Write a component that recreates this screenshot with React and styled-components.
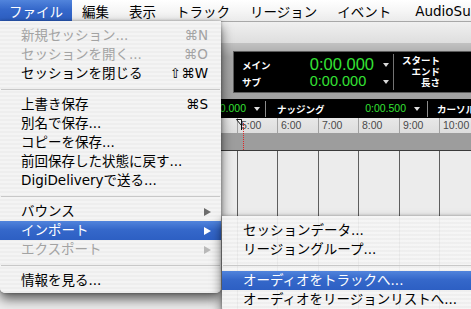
import React from "react";
import styled, { createGlobalStyle, css } from "styled-components";

const Global = createGlobalStyle`
  html, body { margin: 0; padding: 0; background: #ffffff; }
  body { overflow: hidden; }
  #root { width: 471px; height: 309px; }
`;

const UI_FONT = `"DejaVu Sans", "Noto Sans CJK JP", sans-serif`;
const JP_FONT = `"Noto Sans CJK JP", "DejaVu Sans", sans-serif`;
const NUM_FONT = `"Liberation Sans", "DejaVu Sans", sans-serif`;
const HILITE = `linear-gradient(#5184dc, #3568ca 45%, #2d5fc3)`;

const Screen = styled.div`
  position: relative;
  width: 471px;
  height: 309px;
  overflow: hidden;
  display: flex;
  flex-direction: column;
  font-family: ${UI_FONT};
`;

/* ---------- menu bar ---------- */
const MenuBar = styled.div`
  height: 21px;
  flex: none;
  display: flex;
  align-items: stretch;
  background: linear-gradient(#ffffff, #f6f6f6 50%, #ebebeb);
  border-bottom: 1px solid #a8a8a8;
`;

const MenuTitle = styled.div`
  display: flex;
  align-items: center;
  padding: 0 10px;
  font-size: 13.5px;
  color: #000;
  white-space: nowrap;
  ${(p) => p.$first && css`padding-left: 9px; padding-right: 9px;`}
  ${(p) => p.$latin && css`padding-left: 14px;`}
  ${(p) =>
    p.$active &&
    css`
      background: ${HILITE};
      color: #fff;
    `}
`;

/* ---------- background application window ---------- */
const Window = styled.div`
  flex: 1;
  min-height: 0;
  display: flex;
  flex-direction: column;
`;

const TopBand = styled.div`
  height: 21px;
  flex: none;
  background: linear-gradient(#f0f0f0, #dedede);
`;

const TransportBand = styled.div`
  height: 56px;
  flex: none;
  box-sizing: border-box;
  padding: 8px 0 0 233px;
  background: linear-gradient(#c2c2c2, #a6a6a6 25%, #a1a1a1);
`;

const CounterPanel = styled.div`
  height: 42px;
  box-sizing: border-box;
  background: #000;
  border: 1px solid #5c5c5c;
  border-right: none;
  display: flex;
`;

const MainCounter = styled.div`
  width: 159px;
  flex: none;
  box-sizing: border-box;
  padding: 4px 0 0 8px;
  display: grid;
  grid-template-columns: 1fr auto 19px;
  grid-auto-rows: 17px;
  align-items: center;
`;

const PanelLabel = styled.span`
  font-family: ${JP_FONT};
  font-weight: 700;
  font-size: 9.5px;
  color: #fff;
  white-space: nowrap;
`;

const TimeValue = styled.span`
  font-family: ${NUM_FONT};
  font-size: ${(p) => p.$size}px;
  color: #34e234;
  line-height: 1;
  white-space: nowrap;
`;

const DownArrow = styled.span`
  display: block;
  width: 0;
  height: 0;
  border-top: ${(p) => p.$h || 4}px solid ${(p) => p.$color || "#d8d8d8"};
  border-left: ${(p) => (p.$w || 6) / 2}px solid transparent;
  border-right: ${(p) => (p.$w || 6) / 2}px solid transparent;
  flex: none;
`;

const ArrowCell = styled.div`
  justify-self: start;
  padding-left: 9px;
`;

const PanelDivider = styled.div`
  width: 1px;
  margin: 2px 0;
  background: #737373;
  flex: none;
`;

const SideLabels = styled.div`
  width: 46px;
  flex: none;
  box-sizing: border-box;
  padding-top: 3px;
  display: flex;
  flex-direction: column;
  align-items: flex-end;
  line-height: 11px;
`;

const NudgeRow = styled.div`
  height: 19px;
  flex: none;
  background: #000;
  display: flex;
  align-items: center;
`;

const Segment = styled.div`
  width: ${(p) => p.$w}px;
  flex: none;
  height: 100%;
  box-sizing: border-box;
  padding-left: ${(p) => p.$pl}px;
  padding-right: ${(p) => p.$pr || 0}px;
  display: flex;
  align-items: center;
`;

const SegValue = styled.div`
  margin-left: auto;
  display: flex;
  align-items: center;
  gap: 8px;
`;

const RowDivider = styled.div`
  width: 1px;
  height: 16px;
  background: #8c8c8c;
  flex: none;
`;

const Ruler = styled.div`
  height: 15px;
  flex: none;
  display: flex;
  background: linear-gradient(#e8e8e8, #dddddd);
`;

const Band = styled.div`
  height: 17px;
  flex: none;
  background: #9d9d9d;
  border-bottom: 1px solid #3a3a3a;
`;

const Tracks = styled.div`
  flex: 1;
  display: flex;
  background: #ececec;
`;

const LaneLead = styled.div`
  width: 237px;
  flex: none;
`;

const Lane = styled.div`
  width: ${(p) => p.$w}px;
  flex: none;
  box-sizing: border-box;
  border-left: 1px solid ${(p) => p.$line};
  padding-left: 3px;
  font-family: ${NUM_FONT};
  font-size: 10.5px;
  line-height: 15px;
  color: #4a4a4a;
  white-space: nowrap;
`;

const Playhead = styled.svg`
  position: absolute;
  left: 236px;
  top: 119px;
`;

const CursorLine = styled.div`
  position: absolute;
  left: 243px;
  top: 123px;
  height: 27px;
  border-left: 1px dotted #e02424;
`;

/* ---------- menus ---------- */
const Dropdown = styled.div`
  position: absolute;
  left: ${(p) => p.$x}px;
  top: ${(p) => p.$y}px;
  width: ${(p) => p.$w}px;
  box-sizing: border-box;
  padding: 5px 0 3px;
  background: repeating-linear-gradient(
    ${(p) => (p.$glass ? "rgba(246,246,246,0.93)" : "#f4f4f4")} 0 2px,
    ${(p) => (p.$glass ? "rgba(239,239,239,0.93)" : "#eeeeee")} 2px 4px
  );
  box-shadow: 0 6px 12px rgba(0, 0, 0, 0.62), 0 0 3px rgba(0, 0, 0, 0.35);
  border-radius: 0 0 5px 5px;
  z-index: ${(p) => p.$z};
`;

const Item = styled.div`
  height: 19px;
  display: flex;
  align-items: center;
  padding: 0 13px 0 21px;
  font-size: 13.5px;
  line-height: 19px;
  white-space: nowrap;
  color: ${(p) => (p.$disabled ? "#a3a3a3" : p.$active ? "#ffffff" : "#000000")};
  ${(p) =>
    p.$active &&
    css`
      background: ${HILITE};
    `}
`;

const Shortcut = styled.span`
  margin-left: auto;
`;

const SubArrow = styled.span`
  margin-left: auto;
  margin-right: -3px;
  width: 0;
  height: 0;
  border-left: 7px solid ${(p) => p.$color};
  border-top: 4.5px solid transparent;
  border-bottom: 4.5px solid transparent;
`;

const Separator = styled.div`
  height: 12px;
  display: flex;
  align-items: center;
  &::after {
    content: "";
    flex: 1;
    height: 1px;
    margin: 0 1px;
    background: #c8c8c8;
  }
`;

const laneWidths = [40, 41, 40, 41, 40, 40];
const rulerLabels = ["5:00", "6:00", "7:00", "8:00", "9:00", "10:00"];

function MenuItem({ label, shortcut, disabled, active, submenu }) {
  const arrowColor = active ? "#ffffff" : disabled ? "#b8b8b8" : "#6c6c6c";
  return (
    <Item $disabled={disabled} $active={active}>
      <span>{label}</span>
      {shortcut && <Shortcut>{shortcut}</Shortcut>}
      {submenu && <SubArrow $color={arrowColor} />}
    </Item>
  );
}

export default function App() {
  return (
    <Screen>
      <Global />
      <MenuBar>
        <MenuTitle $first $active>ファイル</MenuTitle>
        <MenuTitle>編集</MenuTitle>
        <MenuTitle>表示</MenuTitle>
        <MenuTitle>トラック</MenuTitle>
        <MenuTitle>リージョン</MenuTitle>
        <MenuTitle>イベント</MenuTitle>
        <MenuTitle $latin>AudioSuite</MenuTitle>
      </MenuBar>

      <Window>
        <TopBand />
        <TransportBand>
          <CounterPanel>
            <MainCounter>
              <PanelLabel>メイン</PanelLabel>
              <TimeValue $size={16.5}>0:00.000</TimeValue>
              <ArrowCell>
                <DownArrow />
              </ArrowCell>
              <PanelLabel>サブ</PanelLabel>
              <TimeValue $size={14.5}>0:00.000</TimeValue>
              <ArrowCell>
                <DownArrow />
              </ArrowCell>
            </MainCounter>
            <PanelDivider />
            <SideLabels>
              <PanelLabel>スタート</PanelLabel>
              <PanelLabel>エンド</PanelLabel>
              <PanelLabel>長さ</PanelLabel>
            </SideLabels>
          </CounterPanel>
        </TransportBand>

        <NudgeRow>
          <Segment $w={265} $pl={120} $pr={5}>
            <PanelLabel>グリッド</PanelLabel>
            <SegValue>
              <TimeValue $size={10.5}>0:00.000</TimeValue>
              <DownArrow $w={7} $h={4} $color="#e0e0e0" />
            </SegValue>
          </Segment>
          <RowDivider />
          <Segment $w={161} $pl={11} $pr={7}>
            <PanelLabel>ナッジング</PanelLabel>
            <SegValue>
              <TimeValue $size={10.5}>0:00.500</TimeValue>
              <DownArrow $w={7} $h={4} $color="#e0e0e0" />
            </SegValue>
          </Segment>
          <RowDivider />
          <Segment $w={60} $pl={9}>
            <PanelLabel>カーソル</PanelLabel>
          </Segment>
        </NudgeRow>

        <Ruler>
          <LaneLead />
          {laneWidths.map((w, i) => (
            <Lane key={i} $w={w} $line="#a2a2a2">
              {rulerLabels[i]}
            </Lane>
          ))}
        </Ruler>
        <Band />
        <Tracks>
          <LaneLead />
          {laneWidths.map((w, i) => (
            <Lane key={i} $w={w} $line="#5e5e5e" />
          ))}
        </Tracks>
      </Window>

      <CursorLine />
      <Playhead width="8" height="12" viewBox="0 0 8 12">
        <polygon points="0.5,0.5 5.5,0.5 5.5,6.5" fill="#f4f4f4" stroke="#111" strokeWidth="1" />
        <line x1="5.5" y1="0.5" x2="5.5" y2="11" stroke="#111" strokeWidth="1" />
      </Playhead>

      <Dropdown $x={0} $y={21} $w={221} $z={10}>
        <MenuItem label="新規セッション..." shortcut="⌘N" disabled />
        <MenuItem label="セッションを開く..." shortcut="⌘O" disabled />
        <MenuItem label="セッションを閉じる" shortcut="⇧⌘W" />
        <Separator />
        <MenuItem label="上書き保存" shortcut="⌘S" />
        <MenuItem label="別名で保存..." />
        <MenuItem label="コピーを保存..." />
        <MenuItem label="前回保存した状態に戻す..." />
        <MenuItem label="DigiDeliveryで送る..." />
        <Separator />
        <MenuItem label="バウンス" submenu />
        <MenuItem label="インポート" submenu active />
        <MenuItem label="エクスポート" submenu disabled />
        <Separator />
        <MenuItem label="情報を見る..." />
      </Dropdown>

      <Dropdown $x={222} $y={216} $w={262} $z={11} $glass>
        <MenuItem label="セッションデータ..." />
        <MenuItem label="リージョングループ..." />
        <Separator />
        <MenuItem label="オーディオをトラックへ..." active />
        <MenuItem label="オーディオをリージョンリストへ..." />
      </Dropdown>
    </Screen>
  );
}
